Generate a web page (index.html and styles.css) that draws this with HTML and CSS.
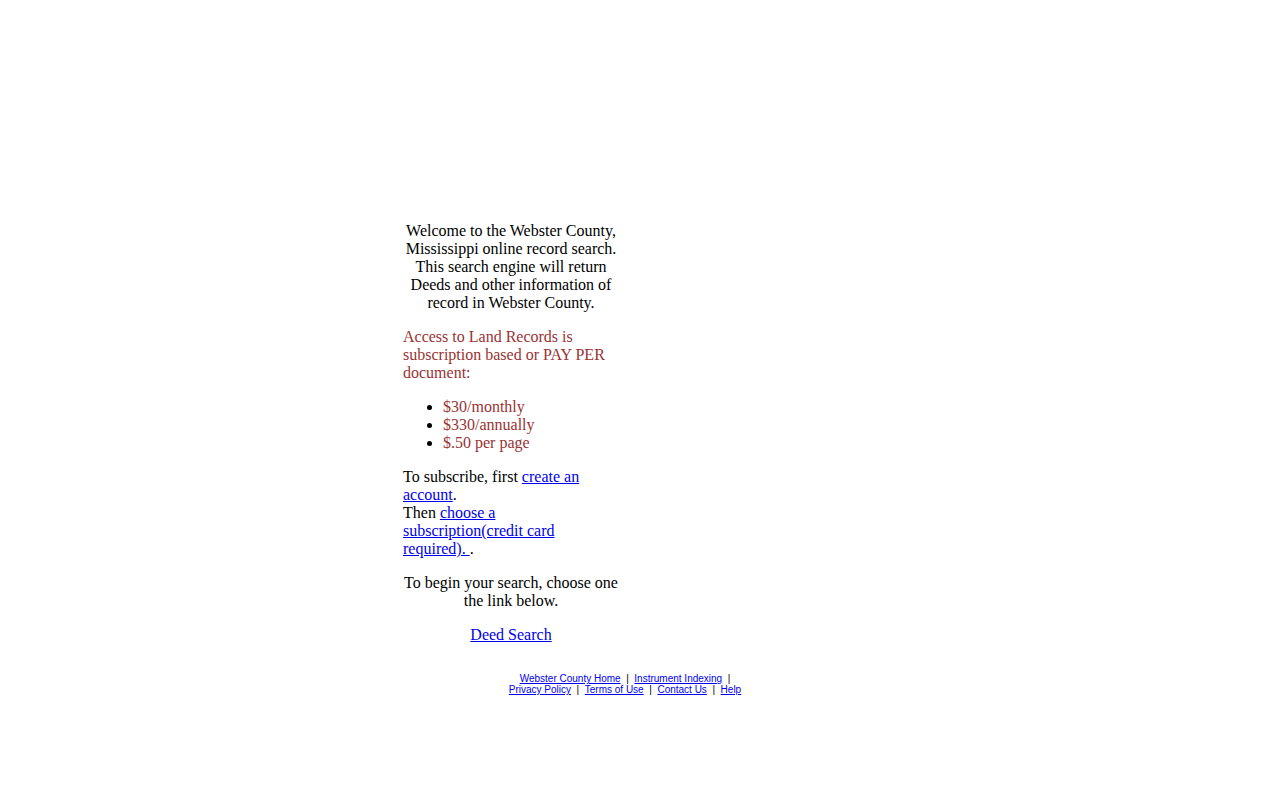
FILE: index.html
```html
<!DOCTYPE html>
<html>
<head>
<meta charset="utf-8">
<title>Webster County Online Records</title>
<link rel="stylesheet" href="styles.css">
</head>
<body>
<div class="page">
  <div class="header"></div>
  <div class="content">
    <div class="column">
      <p class="center">Welcome to the Webster County, Mississippi online record search. This search engine will return Deeds and other information of record in Webster County.</p>
      <p class="red">Access to Land Records is subscription based or PAY PER document:</p>
      <ul class="prices">
        <li><span class="red">$30/monthly</span></li>
        <li><span class="red">$330/annually</span></li>
        <li><span class="red">$.50 per page</span></li>
      </ul>
      <p>To subscribe, first <a href="#">create an account</a>.<br>Then <a href="#">choose a subscription(credit card required). </a>.</p>
      <p class="center">To begin your search, choose one the link below.</p>
      <p class="center"><a href="#">Deed Search</a></p>
    </div>
  </div>
  <div class="footer">
    <a href="#">Webster County Home</a>&nbsp; | &nbsp;<a href="#">Instrument Indexing</a>&nbsp; | <br>
    <a href="#">Privacy Policy</a>&nbsp; | &nbsp;<a href="#">Terms of Use</a>&nbsp; | &nbsp;<a href="#">Contact Us</a>&nbsp; | &nbsp;<a href="#">Help</a>
  </div>
</div>
</body>
</html>
```
FILE: styles.css
```css
body {
  margin: 8px;
  font-family: "Liberation Serif", "Times New Roman", serif;
  font-size: 16px;
  color: #000;
  background: #fff;
}
.page {
  margin-left: 395px;
  width: 444px;
}
.header {
  height: 198px;
}
.content {
  display: flex;
}
.column {
  width: 216px;
}
.column p {
  margin: 16px 0;
}
.prices {
  margin: 16px 0;
  padding-left: 40px;
}
.center {
  text-align: center;
}
.red {
  color: #993333;
}
a {
  color: #0000ee;
}
.footer {
  margin-top: 13px;
  text-align: center;
  font-family: "Liberation Sans", Arial, sans-serif;
  font-size: 10px;
  line-height: 11px;
}
```
